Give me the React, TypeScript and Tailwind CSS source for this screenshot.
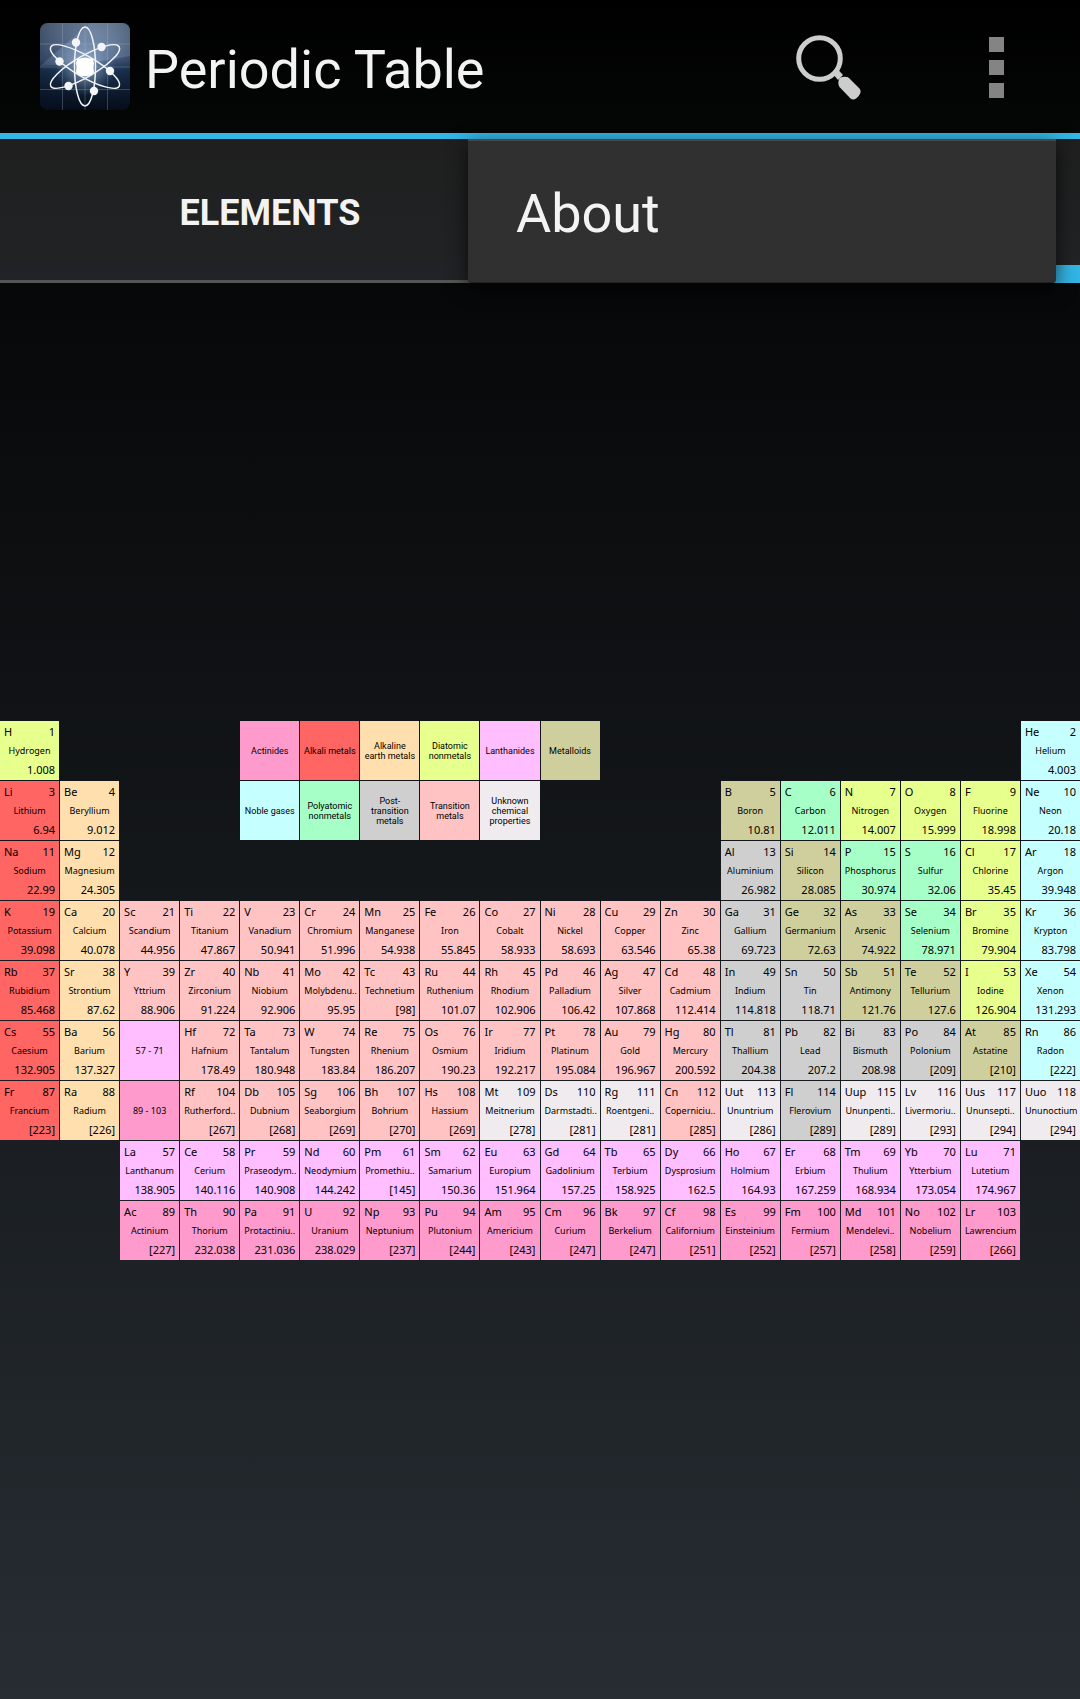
type Kind =
  | "actinide"
  | "alkali"
  | "alkaline"
  | "diatomic"
  | "lanthanide"
  | "metalloid"
  | "noble"
  | "polyatomic"
  | "post"
  | "transition"
  | "unknown";

const fills: Record<Kind, string> = {
  actinide: "bg-[#ff9acc]",
  alkali: "bg-[#ff6562]",
  alkaline: "bg-[#ffdfad]",
  diatomic: "bg-[#e7ff8c]",
  lanthanide: "bg-[#ffbeff]",
  metalloid: "bg-[#cecf9c]",
  noble: "bg-[#c6ffff]",
  polyatomic: "bg-[#a5ffc6]",
  post: "bg-[#cecfce]",
  transition: "bg-[#ffc3c3]",
  unknown: "bg-[#efebef]",
};

const codes: Record<string, Kind> = {
  c: "actinide",
  a: "alkali",
  e: "alkaline",
  d: "diatomic",
  l: "lanthanide",
  m: "metalloid",
  n: "noble",
  p: "polyatomic",
  o: "post",
  t: "transition",
  u: "unknown",
};

/* One string per period: "kind symbol number name weight", "_N" for N empty places. */
const periods: string[] = [
  "d H 1 Hydrogen 1.008|_3|L actinide Actinides|L alkali Alkali metals|L alkaline Alkaline earth metals|L diatomic Diatomic nonmetals|L lanthanide Lanthanides|L metalloid Metalloids|_7|n He 2 Helium 4.003",
  "a Li 3 Lithium 6.94|e Be 4 Beryllium 9.012|_2|L noble Noble gases|L polyatomic Polyatomic nonmetals|L post Post-transition metals|L transition Transition metals|L unknown Unknown chemical properties|_3|m B 5 Boron 10.81|p C 6 Carbon 12.011|d N 7 Nitrogen 14.007|d O 8 Oxygen 15.999|d F 9 Fluorine 18.998|n Ne 10 Neon 20.18",
  "a Na 11 Sodium 22.99|e Mg 12 Magnesium 24.305|_10|o Al 13 Aluminium 26.982|m Si 14 Silicon 28.085|p P 15 Phosphorus 30.974|p S 16 Sulfur 32.06|d Cl 17 Chlorine 35.45|n Ar 18 Argon 39.948",
  "a K 19 Potassium 39.098|e Ca 20 Calcium 40.078|t Sc 21 Scandium 44.956|t Ti 22 Titanium 47.867|t V 23 Vanadium 50.941|t Cr 24 Chromium 51.996|t Mn 25 Manganese 54.938|t Fe 26 Iron 55.845|t Co 27 Cobalt 58.933|t Ni 28 Nickel 58.693|t Cu 29 Copper 63.546|t Zn 30 Zinc 65.38|o Ga 31 Gallium 69.723|m Ge 32 Germanium 72.63|m As 33 Arsenic 74.922|p Se 34 Selenium 78.971|d Br 35 Bromine 79.904|n Kr 36 Krypton 83.798",
  "a Rb 37 Rubidium 85.468|e Sr 38 Strontium 87.62|t Y 39 Yttrium 88.906|t Zr 40 Zirconium 91.224|t Nb 41 Niobium 92.906|t Mo 42 Molybdenu.. 95.95|t Tc 43 Technetium [98]|t Ru 44 Ruthenium 101.07|t Rh 45 Rhodium 102.906|t Pd 46 Palladium 106.42|t Ag 47 Silver 107.868|t Cd 48 Cadmium 112.414|o In 49 Indium 114.818|o Sn 50 Tin 118.71|m Sb 51 Antimony 121.76|m Te 52 Tellurium 127.6|d I 53 Iodine 126.904|n Xe 54 Xenon 131.293",
  "a Cs 55 Caesium 132.905|e Ba 56 Barium 137.327|R lanthanide 57 - 71|t Hf 72 Hafnium 178.49|t Ta 73 Tantalum 180.948|t W 74 Tungsten 183.84|t Re 75 Rhenium 186.207|t Os 76 Osmium 190.23|t Ir 77 Iridium 192.217|t Pt 78 Platinum 195.084|t Au 79 Gold 196.967|t Hg 80 Mercury 200.592|o Tl 81 Thallium 204.38|o Pb 82 Lead 207.2|o Bi 83 Bismuth 208.98|o Po 84 Polonium [209]|m At 85 Astatine [210]|n Rn 86 Radon [222]",
  "a Fr 87 Francium [223]|e Ra 88 Radium [226]|R actinide 89 - 103|t Rf 104 Rutherford.. [267]|t Db 105 Dubnium [268]|t Sg 106 Seaborgium [269]|t Bh 107 Bohrium [270]|t Hs 108 Hassium [269]|u Mt 109 Meitnerium [278]|u Ds 110 Darmstadti.. [281]|u Rg 111 Roentgeni.. [281]|t Cn 112 Coperniciu.. [285]|u Uut 113 Ununtrium [286]|o Fl 114 Flerovium [289]|u Uup 115 Ununpenti.. [289]|u Lv 116 Livermoriu.. [293]|u Uus 117 Ununsepti.. [294]|u Uuo 118 Ununoctium [294]",
  "_2|l La 57 Lanthanum 138.905|l Ce 58 Cerium 140.116|l Pr 59 Praseodym.. 140.908|l Nd 60 Neodymium 144.242|l Pm 61 Promethiu.. [145]|l Sm 62 Samarium 150.36|l Eu 63 Europium 151.964|l Gd 64 Gadolinium 157.25|l Tb 65 Terbium 158.925|l Dy 66 Dysprosium 162.5|l Ho 67 Holmium 164.93|l Er 68 Erbium 167.259|l Tm 69 Thulium 168.934|l Yb 70 Ytterbium 173.054|l Lu 71 Lutetium 174.967|_1",
  "_2|c Ac 89 Actinium [227]|c Th 90 Thorium 232.038|c Pa 91 Protactiniu.. 231.036|c U 92 Uranium 238.029|c Np 93 Neptunium [237]|c Pu 94 Plutonium [244]|c Am 95 Americium [243]|c Cm 96 Curium [247]|c Bk 97 Berkelium [247]|c Cf 98 Californium [251]|c Es 99 Einsteinium [252]|c Fm 100 Fermium [257]|c Md 101 Mendelevi.. [258]|c No 102 Nobelium [259]|c Lr 103 Lawrencium [266]|_1",
];

function Cell({ entry }: { entry: string }) {
  if (entry.startsWith("_")) {
    return (
      <>
        {Array.from({ length: Number(entry.slice(1)) }, (_, i) => (
          <div key={i} />
        ))}
      </>
    );
  }
  const [code, ...rest] = entry.split(" ");
  if (code === "L") {
    return (
      <div className={`flex min-w-0 items-center justify-center px-[3px] pt-0.5 text-center font-[Roboto,sans-serif] text-[9px] leading-[10px] ${fills[rest[0] as Kind]}`}>
        {rest.slice(1).join(" ")}
      </div>
    );
  }
  if (code === "R") {
    return (
      <div className={`flex items-center justify-center pt-0.5 text-[9px] leading-3 ${fills[rest[0] as Kind]}`}>
        {rest.slice(1).join(" ")}
      </div>
    );
  }
  const [symbol, number, name, weight] = rest;
  return (
    <button type="button" className={`flex min-w-0 flex-col justify-between px-1 pt-1 pb-[3px] text-[11px] leading-[14px] ${fills[codes[code]]}`}>
      <span className="flex w-full justify-between">
        <span>{symbol}</span>
        <span>{number}</span>
      </span>
      <span className="w-full text-center text-[9px] leading-3 whitespace-nowrap">{name}</span>
      <span className="w-full text-right">{weight}</span>
    </button>
  );
}

function AtomIcon() {
  const orbit = "M45 4C51 4 55.500 22 55.500 43.500S51 83 45 83S34.500 65 34.500 43.500S39 4 45 4Z";
  return (
    <svg viewBox="0 0 90 87" className="h-[87px] w-[90px]" aria-hidden="true">
      <defs>
        <linearGradient id="tile" x1="0" y1="0" x2="0" y2="1">
          <stop offset="0" stopColor="#70839f" />
          <stop offset="0.42" stopColor="#42597a" />
          <stop offset="0.55" stopColor="#1c3453" />
          <stop offset="1" stopColor="#050b18" />
        </linearGradient>
        <radialGradient id="shade" cx="0.55" cy="0.4" r="0.65">
          <stop offset="0.4" stopColor="#06101f" stopOpacity="0" />
          <stop offset="1" stopColor="#06101f" stopOpacity="0.4" />
        </radialGradient>
        <radialGradient id="core">
          <stop offset="0" stopColor="#b9cde8" stopOpacity="0.75" />
          <stop offset="1" stopColor="#8da9cc" stopOpacity="0" />
        </radialGradient>
      </defs>
      <rect width="90" height="87" rx="8" fill="url(#tile)" />
      <path d="M0 43Q50 42 90 33V8Q90 0 82 0H50Z" fill="#9db4cf" opacity="0.3" />
      <rect width="90" height="87" rx="8" fill="url(#shade)" />
      <path d="M22.500 0V87M45 0V87M67.500 0V87M0 21H90M0 44H90M0 66.500H90" stroke="#a9bdd6" strokeOpacity="0.28" />
      <circle cx="45" cy="43" r="30" fill="url(#core)" />
      <g fill="none" stroke="#f2f5f8" strokeWidth="1.500">
        <path d={orbit} />
        <path d={orbit} transform="rotate(60 45 43.500)" />
        <path d={orbit} transform="rotate(-60 45 43.500)" />
      </g>
      <path d="M45 35.500L48 36L52 36.500L53 40L52.500 44L53 49L50 51.500L45 52.500L40 51.500L37 49L37.500 44L37 40L38 37L42 36Z" fill="#fff" stroke="#fff" strokeWidth="2" strokeLinejoin="round" />
      <g fill="#f3f5f8">
        <circle cx="36" cy="19.500" r="4.200" />
        <circle cx="61.500" cy="24" r="4.200" />
        <circle cx="19.500" cy="38.500" r="4.200" />
        <circle cx="70" cy="48" r="4.200" />
        <circle cx="28.500" cy="63" r="4.200" />
        <circle cx="54" cy="68" r="4.200" />
      </g>
    </svg>
  );
}

export default function App() {
  return (
    <div className="flex min-h-screen flex-col bg-linear-to-b/srgb from-black to-[#272d33] font-['Noto_Sans',sans-serif] text-black">
      <header className="relative z-10 flex h-[139px] items-center border-b-6 border-[#33b5e5] bg-linear-to-b/srgb from-black to-[#050606] pl-10 font-[Roboto,sans-serif]">
        <AtomIcon />
        <h1 className="ml-[15px] flex-1 pt-1.5 text-[54px] leading-[64px] whitespace-nowrap text-[#f3f3f3]">Periodic Table</h1>
        <button type="button" aria-label="Search" className="mr-[127px] pt-0.5">
          <svg viewBox="0 0 66 66" className="size-[66px]" aria-hidden="true">
            <circle cx="23.500" cy="23.500" r="20.800" fill="none" stroke="#cdcdcd" strokeWidth="5" />
            <path d="M37 39L42 34.500L47 40L42 45Z" fill="#cdcdcd" />
            <path d="M43 45Q43 42.500 46 42Q51 41 53 43L63.500 53.500Q66 56.500 63 60.500Q58.500 66.500 54.500 63.500L43.500 52Q42 50 42.500 46Z" fill="#cdcdcd" />
          </svg>
        </button>
        <button type="button" aria-label="More options" aria-expanded="true" className="mr-[76px] flex flex-col gap-2 pt-0.5">
          <span className="size-[15px] bg-[#848484]" />
          <span className="size-[15px] bg-[#848484]" />
          <span className="size-[15px] bg-[#848484]" />
        </button>
        <div role="menu" className="absolute top-[139px] right-6 w-[588px] rounded-b border-t-2 border-b border-t-[#474747] border-b-[#222222] bg-[#303030] shadow-[0_6px_20px_rgba(0,0,0,0.7)]">
          <button type="button" role="menuitem" className="flex h-[141px] w-full items-center px-12 pt-1 text-[54px] leading-[64px] text-[#f3f3f3]">
            About
          </button>
        </div>
      </header>

      <nav role="tablist" className="flex h-36 bg-linear-to-b/srgb from-[#1e1f1e] to-[#222326] font-[Roboto,sans-serif]">
        <button type="button" role="tab" aria-selected="false" className="flex-1 border-b-3 border-[#555555] pt-1.5 text-[36px] leading-[42px] font-bold text-[#f3f3f3]">
          ELEMENTS
        </button>
        <button type="button" role="tab" aria-selected="true" aria-label="Table" className="flex-1 border-b-18 border-[#33b5e5]" />
      </nav>

      <main className="flex flex-1 flex-col justify-center pb-0.5">
        <div className="grid auto-rows-[59px] grid-cols-18 gap-px">
          {periods.flatMap((period, row) => period.split("|").map((entry, i) => <Cell key={`${row}-${i}`} entry={entry} />))}
        </div>
      </main>
    </div>
  );
}
